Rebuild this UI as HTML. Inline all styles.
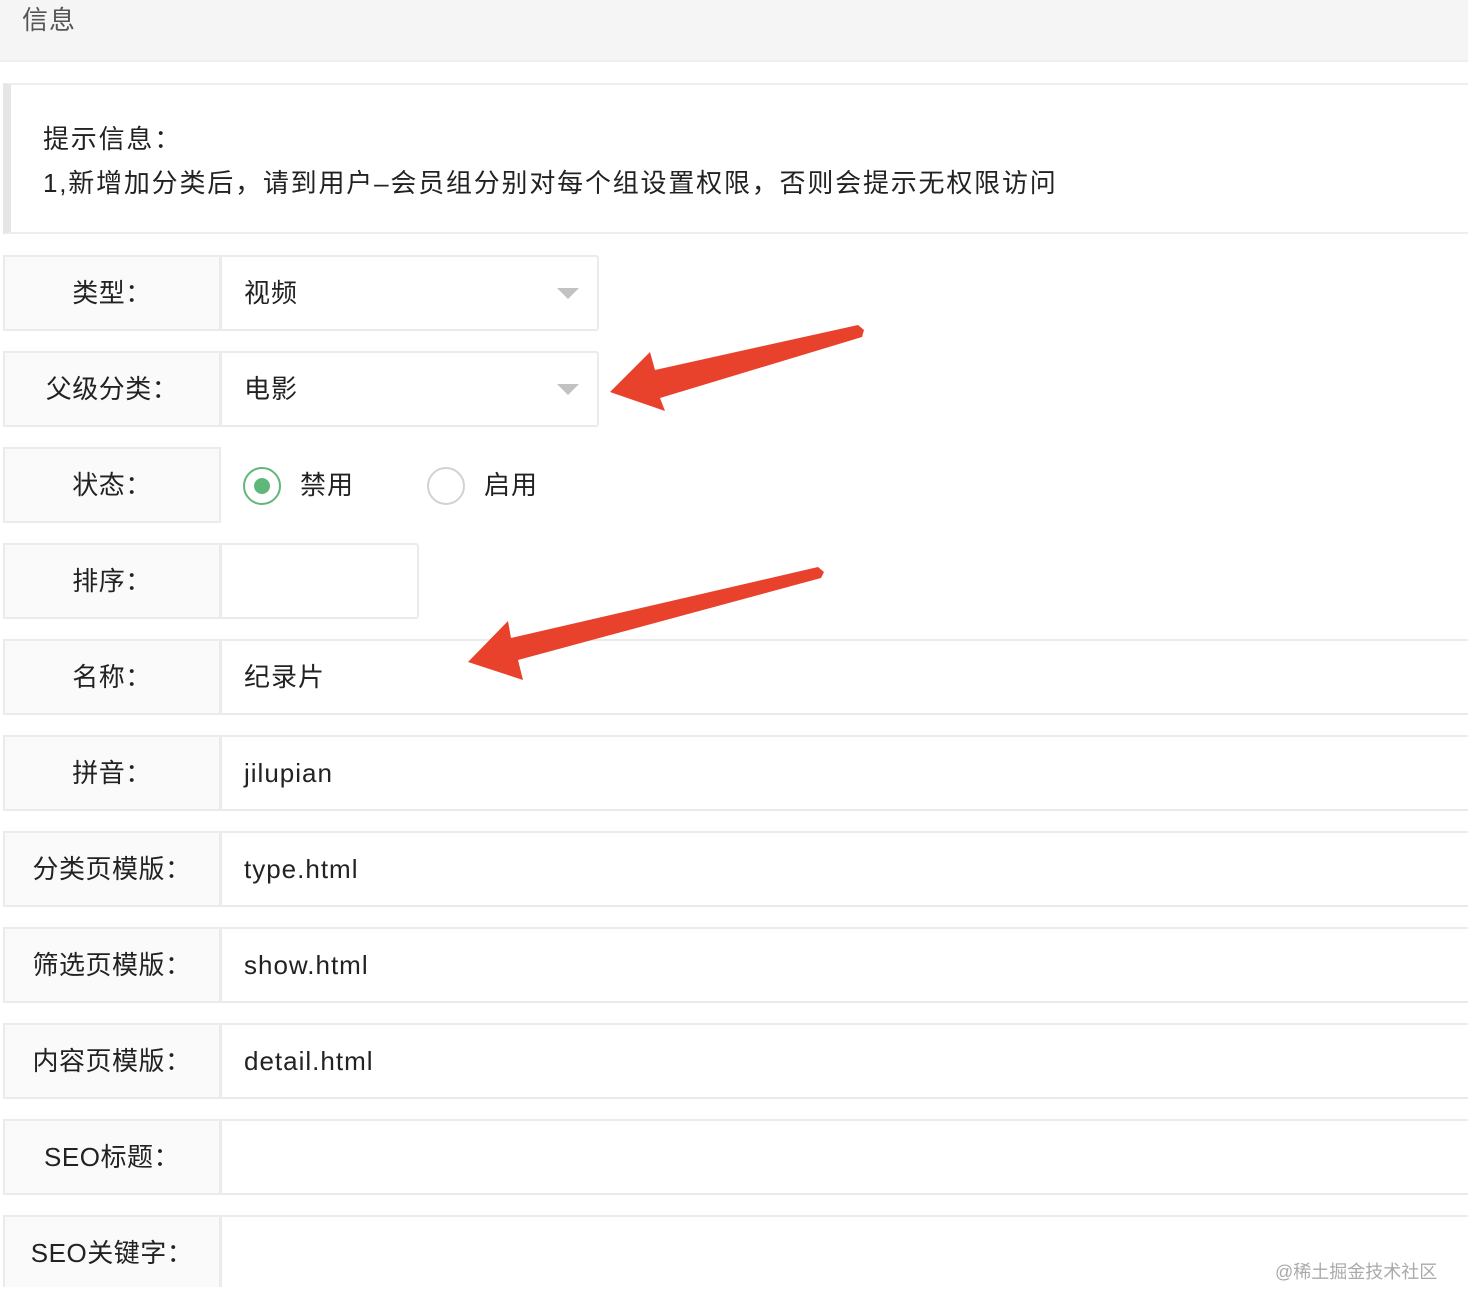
<!DOCTYPE html>
<html><head><meta charset="utf-8"><style>
*{margin:0;padding:0;box-sizing:border-box}
body{width:1468px;height:1312px;background:#fff;font-family:"Liberation Sans","Noto Sans CJK SC",sans-serif;color:#333;position:relative;overflow:hidden;letter-spacing:1px}
.hd{position:absolute;left:0;top:0;width:1468px;height:62px;background:#f5f5f5;border-bottom:2px solid #eee}
.hd span{position:absolute;left:22px;top:0;font-size:26px;color:#555}
.tip{position:absolute;left:3px;top:83px;width:1470px;height:151px;border:2px solid #eee;border-left:8px solid #e6e6e6;background:#fff}
.tip div{position:absolute;left:32px;font-size:26px;color:#222;white-space:nowrap;letter-spacing:1.8px}
.row{position:absolute;left:3px;height:76px}
.lab{position:absolute;left:0;top:0;width:218px;height:76px;background:#fafafa;border:2px solid #ebebeb;text-align:center;line-height:72px;font-size:26px;color:#222;white-space:nowrap;letter-spacing:0.5px}
.inp{position:absolute;left:217px;top:0;height:76px;border:2px solid #ebebeb;background:#fff;line-height:72px;font-size:26px;padding-left:22px;color:#222;border-radius:0 3px 3px 0}
.tri{position:absolute;right:18px;top:31px;border-left:11px solid transparent;border-right:11px solid transparent;border-top:11px solid #c2c2c2}
.rad{position:absolute;top:20px;width:38px;height:38px;border:2px solid #d2d2d2;border-radius:50%}
.rad.on{border-color:#5fb878}
.rad.on:after{content:"";position:absolute;left:9px;top:9px;width:16px;height:16px;border-radius:50%;background:#5fb878}
.rt{position:absolute;top:0;line-height:76px;font-size:26px;color:#222;white-space:nowrap}
</style></head><body>
<div class="hd"><span>信息</span></div>
<div class="tip"><div style="top:34px">提示信息：</div><div style="top:78px">1,新增加分类后，请到用户–会员组分别对每个组设置权限，否则会提示无权限访问</div></div>

<div class="row" style="top:255px"><div class="lab">类型：</div><div class="inp" style="width:379px">视频<span class="tri"></span></div></div>
<div class="row" style="top:351px"><div class="lab">父级分类：</div><div class="inp" style="width:379px">电影<span class="tri"></span></div></div>
<div class="row" style="top:447px"><div class="lab">状态：</div>
<span class="rad on" style="left:240px"></span><span class="rt" style="left:297px">禁用</span>
<span class="rad" style="left:424px"></span><span class="rt" style="left:481px">启用</span></div>
<div class="row" style="top:543px"><div class="lab">排序：</div><div class="inp" style="width:199px"></div></div>
<div class="row" style="top:639px"><div class="lab">名称：</div><div class="inp" style="width:1260px">纪录片</div></div>
<div class="row" style="top:735px"><div class="lab">拼音：</div><div class="inp" style="width:1260px">jilupian</div></div>
<div class="row" style="top:831px"><div class="lab">分类页模版：</div><div class="inp" style="width:1260px">type.html</div></div>
<div class="row" style="top:927px"><div class="lab">筛选页模版：</div><div class="inp" style="width:1260px">show.html</div></div>
<div class="row" style="top:1023px"><div class="lab">内容页模版：</div><div class="inp" style="width:1260px">detail.html</div></div>
<div class="row" style="top:1119px"><div class="lab">SEO标题：</div><div class="inp" style="width:1260px"></div></div>
<div class="row" style="top:1215px"><div class="lab" style="height:72px;border-bottom:none">SEO关键字：</div><div class="inp" style="width:1260px;height:72px;border-bottom:none"></div></div>
<div style="position:absolute;left:1275px;top:1258px;font-size:18px;color:#aaa;letter-spacing:0">@稀土掘金技术社区</div>

<svg style="position:absolute;left:0;top:0" width="1468" height="1312">
<polygon fill="#e8412c" points="610,392 650,352 655,370 858,325 864,330 862,337 660,398 665,411"/>
<polygon fill="#e8412c" points="468,662 508,621 511,638 818,567 824,572 821,578 518,660 523,680"/>
</svg>
</body></html>
